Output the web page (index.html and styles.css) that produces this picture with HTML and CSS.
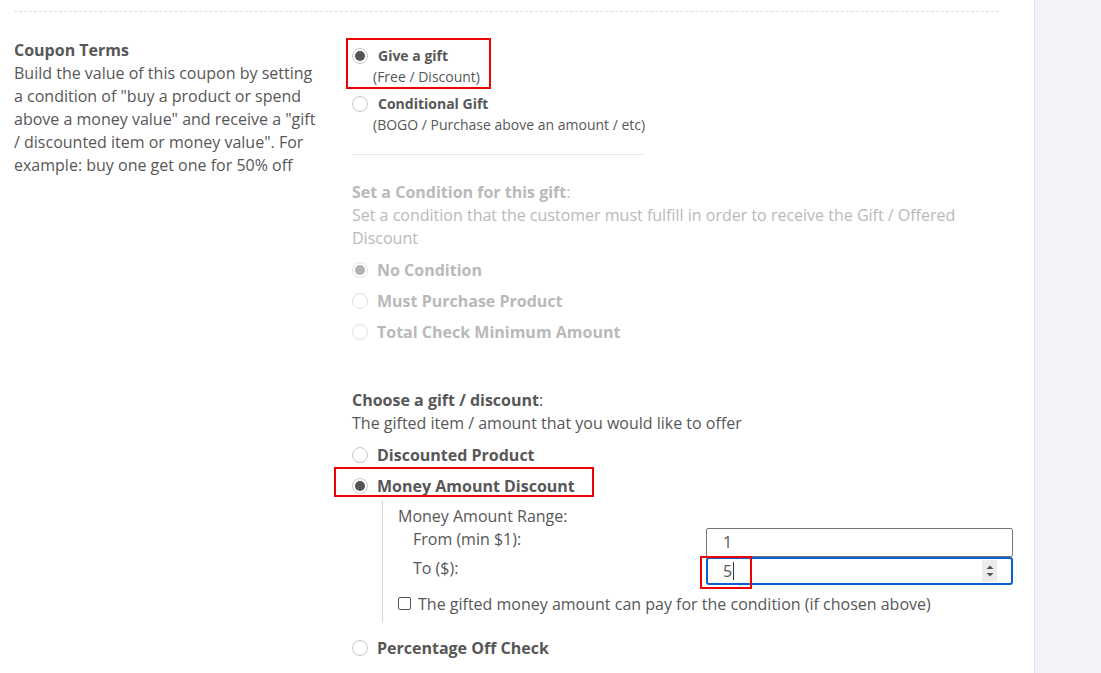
FILE: index.html
```html
<!DOCTYPE html>
<html>
<head>
<meta charset="utf-8">
<link rel="stylesheet" href="styles.css">
</head>
<body>
<div class="page">
  <main class="main">
    <div class="dashed"></div>
    <section class="row">
      <div class="left">
        <h3 class="left-title">Coupon Terms</h3>
        <p class="left-desc">Build the value of this coupon by setting a condition of "buy a product or spend above a money value" and receive a "gift / discounted item or money value". For example: buy one get one for 50% off</p>
      </div>
      <div class="right">
        <div class="type-opt">
          <span class="radio checked"></span>
          <div class="type-text">
            <div class="type-title">Give a gift</div>
            <div class="type-sub">(Free / Discount)</div>
          </div>
          <span class="mark mark-1"></span>
        </div>
        <div class="type-opt">
          <span class="radio"></span>
          <div class="type-text">
            <div class="type-title">Conditional Gift</div>
            <div class="type-sub">(BOGO / Purchase above an amount / etc)</div>
          </div>
        </div>
        <div class="sep"></div>

        <div class="group disabled">
          <div class="g-title"><b>Set a Condition for this gift</b>:</div>
          <div class="g-desc">Set a condition that the customer must fulfill in order to receive the Gift / Offered Discount</div>
          <div class="opt first"><span class="radio checked"></span><span class="opt-label">No Condition</span></div>
          <div class="opt"><span class="radio"></span><span class="opt-label">Must Purchase Product</span></div>
          <div class="opt"><span class="radio"></span><span class="opt-label">Total Check Minimum Amount</span></div>
        </div>

        <div class="group gift">
          <div class="g-title"><b>Choose a gift / discount</b>:</div>
          <div class="g-desc">The gifted item / amount that you would like to offer</div>
          <div class="opt first"><span class="radio"></span><span class="opt-label">Discounted Product</span></div>
          <div class="opt"><span class="radio checked"></span><span class="opt-label">Money Amount Discount</span><span class="mark mark-2"></span></div>
          <div class="sub">
            <div class="sub-title">Money Amount Range:</div>
            <div class="range">
              <span class="range-label">From (min $1):</span>
              <div class="field">1</div>
              <span class="range-label">To ($):</span>
              <div class="field focus">5<span class="caret"></span><span class="spin"><svg width="10" height="18" viewBox="0 0 10 18"><path d="M1.5 7 L5 3.5 L8.5 7 Z" fill="#555"/><path d="M1.5 11 L5 14.5 L8.5 11 Z" fill="#555"/></svg></span><span class="mark mark-3"></span></div>
            </div>
            <label class="check"><span class="box"></span>The gifted money amount can pay for the condition (if chosen above)</label>
          </div>
          <div class="opt last"><span class="radio"></span><span class="opt-label">Percentage Off Check</span></div>
        </div>
      </div>
    </section>
  </main>
  <aside class="side"></aside>
</div>
</body>
</html>
```
FILE: styles.css
```css
* { box-sizing: border-box; }
html, body { margin: 0; padding: 0; }
body {
  font-family: "Open Sans", "Liberation Sans", sans-serif;
  font-size: 16px;
  color: #575757;
  background: #fff;
  overflow: hidden;
}
.page {
  display: flex;
  height: 673px;
}
.main {
  width: 1034px;
  padding-left: 14px;
}
.side {
  flex: 1;
  background: #f2f3f8;
  border-left: 1px solid #dfe3ea;
}
.dashed {
  margin-top: 11px;
  width: 985px;
  border-top: 1px dashed #dddddd;
}
.row {
  display: flex;
  margin-top: 27px;
}
.left {
  width: 338px;
  flex: none;
}
.left-title {
  margin: 0;
  font-size: 16px;
  font-weight: 700;
  line-height: 23px;
}
.left-desc {
  margin: 0;
  width: 306px;
  font-size: 16px;
  line-height: 23px;
}
.right {
  width: 640px;
  padding-top: 6px;
}
.type-opt {
  position: relative;
  display: flex;
  align-items: flex-start;
  margin-bottom: 6px;
}
.type-opt .radio { margin-top: 3px; }
.type-text { margin-left: 10px; }
.type-title {
  font-weight: 700;
  font-size: 14px;
  line-height: 21px;
}
.type-sub {
  font-size: 14px;
  line-height: 21px;
  margin-left: -5px;
}
.radio {
  flex: none;
  width: 16px;
  height: 16px;
  border-radius: 50%;
  border: 1px solid #c9c9c9;
  background: #fff;
  display: inline-flex;
  align-items: center;
  justify-content: center;
}
.radio.checked::after {
  content: "";
  width: 10px;
  height: 10px;
  border-radius: 50%;
  background: #555;
}
.sep {
  width: 291px;
  border-top: 1px solid #e6e6e6;
  margin-top: 19px;
}
.group { margin-top: 26px; }
.group.gift { margin-top: 42px; }
.g-title, .g-desc { line-height: 23px; }
.g-title b { font-weight: 700; }
.opt {
  position: relative;
  display: flex;
  align-items: center;
  height: 31px;
}
.opt.first { margin-top: 4px; }
.opt.last { margin-top: 9px; }
.opt-label {
  margin-left: 9px;
  font-weight: 700;
}
.disabled { color: #b9b9b9; }
.disabled .radio { border-color: #e0e0e0; }
.disabled .radio.checked::after { background: #b0b0b0; }
.sub {
  margin-left: 30px;
  border-left: 1px solid #d6d6d6;
  padding: 4px 0 8px 15px;
}
.sub-title { line-height: 23px; }
.range {
  display: grid;
  grid-template-columns: 308px 307px;
  grid-template-rows: 29px 28px;
}
.range-label {
  padding-left: 15px;
  line-height: 23px;
}
.field {
  position: relative;
  border: 1px solid #767676;
  border-radius: 2px;
  padding-left: 16px;
  line-height: 27px;
}
.field.focus {
  border: 2px solid #0b5fd1;
  border-radius: 3px;
  padding-left: 15px;
  display: flex;
  align-items: center;
}
.caret {
  display: inline-block;
  width: 1px;
  height: 18px;
  background: #333;
  margin-left: 1px;
}
.spin {
  position: absolute;
  right: 14px;
  top: 1px;
  width: 15px;
  height: 22px;
  background: #ececec;
  display: flex;
  align-items: center;
  justify-content: center;
}
.check {
  display: flex;
  align-items: center;
  height: 23px;
  margin-top: 7px;
}
.box {
  width: 13px;
  height: 13px;
  border: 1px solid #555;
  border-radius: 2px;
  margin-right: 7px;
}
.mark {
  position: absolute;
  border: 2px solid #ee0000;
  pointer-events: none;
}
.mark-1 { left: -6px; top: -7px; width: 145px; height: 51px; }
.mark-2 { left: -18px; top: -3px; width: 260px; height: 30px; }
.mark-3 { left: -8px; top: -3px; width: 52px; height: 33px; }
```
